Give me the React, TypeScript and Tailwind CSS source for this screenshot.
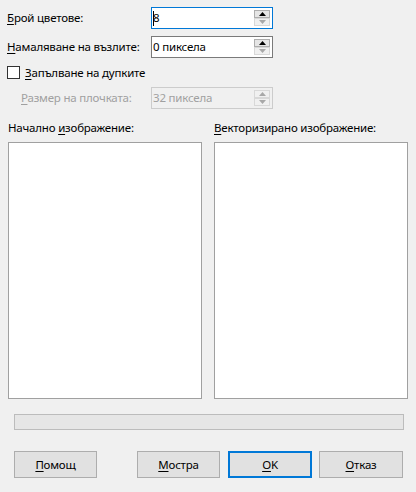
import React from "react";

const U = ({ c }: { c: string }) => <span className="underline underline-offset-[2px] decoration-[1px]">{c}</span>;

function Arrow({ up, dim }: { up: boolean; dim: boolean }) {
  return (
    <svg width="7" height="4" viewBox="0 0 7 4" className="block">
      {up ? (
        <polygon points="0,4 7,4 3.5,0" fill={dim ? "#a8a8a8" : "#000"} />
      ) : (
        <polygon points="0,0 7,0 3.5,4" fill={dim ? "#a8a8a8" : "#606060"} />
      )}
    </svg>
  );
}

function SpinBox({
  value,
  active,
  disabled,
  cursor,
}: {
  value: string;
  active?: boolean;
  disabled?: boolean;
  cursor?: boolean;
}) {
  const border = active ? "border-[#0078d7]" : disabled ? "border-[#cccccc]" : "border-[#7a7a7a]";
  return (
    <div
      className={`w-[122px] h-[22px] border ${border} ${disabled ? "bg-[#f0f0f0]" : "bg-white"} flex items-center`}
    >
      <div className={`flex-1 flex items-center pl-[1px] ${disabled ? "text-[#a0a0a0]" : "text-black"}`}>
        {cursor && <span className="w-[1px] h-[15px] bg-black mr-[-1px]" />}
        <span>{value}</span>
      </div>
      <div className="w-[16px] mr-[2px] flex flex-col gap-0">
        <div
          className={`h-[8px] flex items-center justify-center border ${
            disabled ? "border-[#d8d8d8] bg-[#f0f0f0]" : "border-[#adadad] bg-[#e5e5e5]"
          }`}
        >
          <Arrow up dim={!!disabled} />
        </div>
        <div className="h-[8px] flex items-center justify-center border border-[#d8d8d8] bg-[#f0f0f0]">
          <Arrow up={false} dim />
        </div>
      </div>
    </div>
  );
}

function Btn({ children, w, def }: { children: React.ReactNode; w: string; def?: boolean }) {
  return (
    <div
      className={`${w} h-[27px] flex items-center justify-center bg-[#e1e1e1] ${
        def ? "border-2 border-[#0078d7]" : "border border-[#adadad]"
      }`}
    >
      {children}
    </div>
  );
}

export default function App() {
  return (
    <div className="w-[416px] h-[492px] bg-[#f0f0f0] text-[11.5px] tracking-[-0.2px] leading-[16px] text-black font-['Segoe_UI','Noto_Sans',sans-serif] flex flex-col overflow-hidden">
      <div className="mt-[7px] flex items-center h-[22px]">
        <div className="w-[151px] pl-[7px]">
          <U c="Б" />рой цветове:
        </div>
        <SpinBox value="8" active cursor />
      </div>
      <div className="mt-[7px] flex items-center h-[22px]">
        <div className="w-[151px] pl-[7px]">
          <U c="Н" />амаляване на възлите:
        </div>
        <SpinBox value="0 пиксела" />
      </div>
      <div className="mt-[8px] flex items-center h-[13px]">
        <div className="ml-[7px] w-[13px] h-[13px] border border-[#333333] bg-white" />
        <div className="ml-[5px]">
          <U c="З" />апълване на дупките
        </div>
      </div>
      <div className="mt-[8px] flex items-center h-[22px]">
        <div className="w-[151px] pl-[21px] text-[#a0a0a0]">
          <U c="Р" />азмер на плочката:
        </div>
        <SpinBox value="32 пиксела" disabled />
      </div>
      <div className="mt-[11px] flex h-[16px]">
        <div className="w-[206px] pl-[8px]">
          Начално <U c="и" />зображение:
        </div>
        <div className="pl-[8px]">
          <U c="В" />екторизирано изображение:
        </div>
      </div>
      <div className="mt-[6px] flex pl-[8px] gap-[12px]">
        <div className="w-[194px] h-[257px] bg-white border border-[#a0a0a0]" />
        <div className="w-[194px] h-[257px] bg-white border border-[#a0a0a0]" />
      </div>
      <div className="mt-[15px] ml-[14px] w-[390px] h-[16px] bg-[#e6e6e6] border border-[#bcbcbc]" />
      <div className="mt-[21px] flex pl-[14px]">
        <Btn w="w-[83px]">
          <span>
            <U c="П" />омощ
          </span>
        </Btn>
        <div className="ml-[40px]">
          <Btn w="w-[83px]">
            <span>
              <U c="М" />остра
            </span>
          </Btn>
        </div>
        <div className="ml-[8px]">
          <Btn w="w-[84px]" def>
            <span>
              <U c="O" />K
            </span>
          </Btn>
        </div>
        <div className="ml-[7px]">
          <Btn w="w-[84px]">
            <span>
              <U c="О" />тказ
            </span>
          </Btn>
        </div>
      </div>
    </div>
  );
}
